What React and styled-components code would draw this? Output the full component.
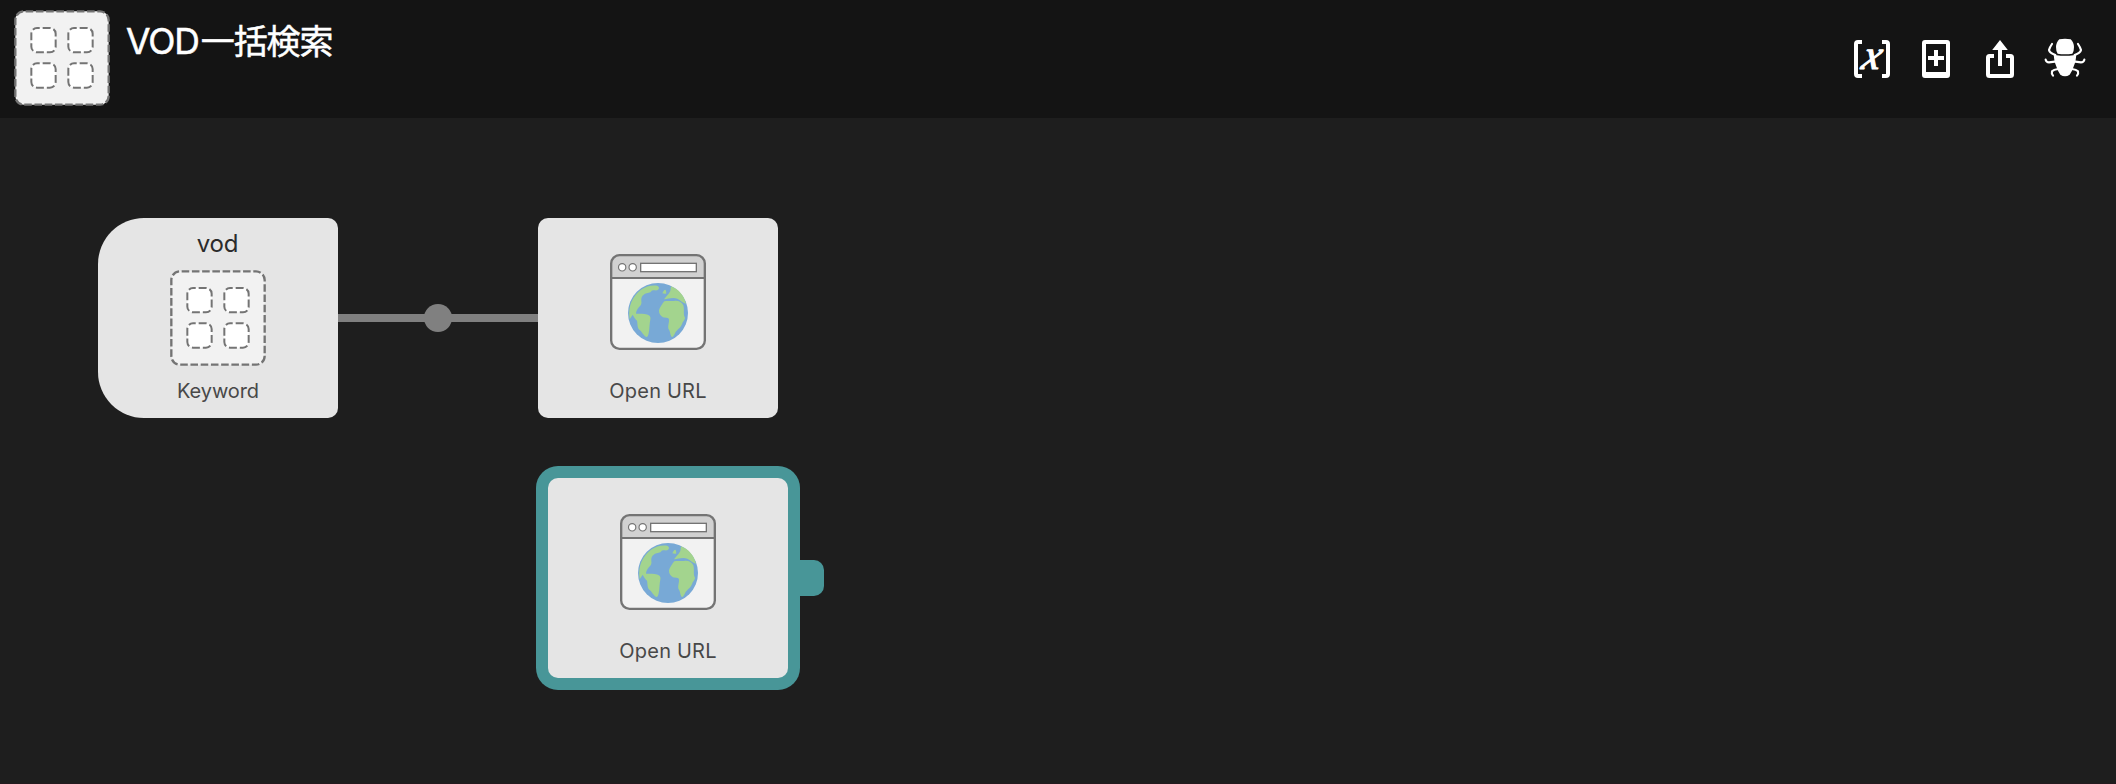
import React from "react";
import styled, { createGlobalStyle, css } from "styled-components";

const GlobalStyle = createGlobalStyle`
  * { box-sizing: border-box; }
  body { margin: 0; background: #1e1e1e; }
`;

const Page = styled.div`
  display: flex;
  flex-direction: column;
  width: 100%;
  height: 100vh;
  min-height: 784px;
  background: #1e1e1e;
  font-family: Inter, "Noto Sans CJK JP", sans-serif;
`;

const Header = styled.header`
  display: flex;
  align-items: flex-start;
  flex: none;
  height: 118px;
  padding: 10px 20px 0 14px;
  background: #141414;
`;

const Title = styled.h1`
  flex: 1;
  margin: 9px 0 0 16px;
  color: #fff;
  font-size: 35.5px;
  font-weight: 400;
  line-height: 46px;
  letter-spacing: -1.1px;
  white-space: nowrap;
  -webkit-text-stroke: 0.5px #fff;
`;

const Kanji = styled.span`
  font-family: "Noto Sans CJK JP", sans-serif;
  font-size: 34px;
  line-height: 1;
  letter-spacing: -1.1px;
  margin-left: 2px;
`;

const Tools = styled.nav`
  display: flex;
  height: 98px;
`;

const ToolButton = styled.button`
  display: flex;
  align-items: center;
  justify-content: center;
  width: 64px;
  height: 98px;
  padding: 0;
  border: 0;
  background: none;
  color: #fff;
`;

const Canvas = styled.main`
  position: relative;
  flex: 1;
  border-bottom: 1px solid #231a1e;
`;

const shapes = {
  keyword: css`
    border-radius: 46px 10px 10px 46px;
  `,
  action: css`
    border-radius: 10px;
  `,
};

const Node = styled.section`
  position: absolute;
  left: ${(p) => p.$x}px;
  top: ${(p) => p.$y}px;
  display: flex;
  flex-direction: column;
  align-items: center;
  width: 240px;
  height: 200px;
  background: #e5e5e5;
  ${(p) => shapes[p.$shape]}
  ${(p) => p.$selected && "box-shadow: 0 0 0 12px #489698;"}
`;

const NodeTop = styled.div`
  flex: none;
  height: ${(p) => p.$height}px;
  padding: 11px 1px 0 0;
  color: #2b2b2b;
  font-size: 24px;
  line-height: 29px;
  letter-spacing: -0.2px;
`;

const NodeLabel = styled.div`
  margin-top: auto;
  height: 39px;
  color: #484848;
  font-size: 20px;
  line-height: 24px;
  letter-spacing: ${(p) => p.$tracking}px;
  white-space: nowrap;
`;

const OutputTab = styled.div`
  position: absolute;
  left: 252px;
  top: 82px;
  width: 24px;
  height: 36px;
  border-radius: 0 10px 10px 0;
  background: #489698;
`;

const Connector = styled.div`
  position: absolute;
  left: 338px;
  top: 186px;
  display: flex;
  align-items: center;
  justify-content: center;
  width: 200px;
  height: 28px;
  background: linear-gradient(#808080, #808080) center / 100% 8px no-repeat;
`;

const ConnectorDot = styled.span`
  width: 28px;
  height: 28px;
  border-radius: 50%;
  background: #808080;
`;

const Artwork = styled.svg`
  flex: none;
  width: 96px;
  height: 96px;
`;

function GridIcon() {
  return (
    <Artwork viewBox="0 0 288 288">
      <rect x="4" y="4" width="280" height="280" rx="26" fill="#f2f2f2" />
      <rect x="4" y="4" width="280" height="280" rx="26" fill="none" stroke="#747474" strokeWidth="7" strokeDasharray="22.700 8" strokeDashoffset="-5" />
      {[[52, 54], [163, 54], [52, 160], [163, 160]].map(([x, y]) => (
        <rect key={`${x}-${y}`} x={x} y={y} width="73" height="73" rx="17" fill="#fff" stroke="#747474" strokeWidth="6" strokeDasharray="24 8.850" strokeDashoffset="-17" />
      ))}
    </Artwork>
  );
}

function BrowserIcon() {
  return (
    <Artwork viewBox="60 42 288 288">
      <rect x="63.5" y="45.5" width="281" height="281" rx="25" fill="#f2f2f2" />
      <path d="M63.500 114V70.500a25 25 0 0 1 25-25h231a25 25 0 0 1 25 25V114Z" fill="#d1d1d1" />
      <rect x="63.5" y="45.5" width="281" height="281" rx="25" fill="none" stroke="#747474" strokeWidth="7" />
      <path d="M64 114H344" stroke="#747474" strokeWidth="6" />
      <circle cx="96.500" cy="82" r="11" fill="#fff" stroke="#747474" strokeWidth="3.500" />
      <circle cx="128" cy="82" r="11" fill="#fff" stroke="#747474" strokeWidth="3.500" />
      <rect x="152" y="70" width="167" height="25" fill="#fff" stroke="#747474" strokeWidth="4" />
      <circle cx="204" cy="219" r="90" fill="#78a9d6" />
      <g fill="#a3d48e">
        <path d="M119 238C113 198 128 168 153 149C168 139 188 134 203 138C209 141 208 148 202 151C194 152 187 149 183 155C178 160 168 157 163 163C154 169 153 176 154 183C156 192 152 197 147 201C141 208 138 215 138 221C146 222 154 221 163 222C175 223 184 227 181 239C178 251 179 266 176 280C174 290 171 294 165 289C158 282 155 275 149 270C141 264 143 250 141 242C136 237 131 230 128 224Z" />
        <path d="M243 139L241 153C236 164 227 170 222 178C235 176 249 171 262 176C271 180 277 188 288 191C282 165 264 147 243 139Z" />
        <path d="M223 184C233 182 243 184 252 183C265 181 276 187 280 196C284 209 279 222 284 231C288 236 279 244 277 250C273 264 261 268 255 280C251 288 249 293 245 290C240 284 242 275 235 266C233 255 238 247 237 239C236 231 226 236 219 232C212 228 206 220 207 211C209 202 217 192 223 184Z" />
        <path d="M217 160C219 155 222 149 226 149C229 152 228 157 229 160C225 163 221 161 217 160Z" />
      </g>
    </Artwork>
  );
}

function VariableIcon() {
  return (
    <svg width="36" height="38" viewBox="0 0 36 38" overflow="visible">
      <path d="M8 2H4a2 2 0 0 0-2 2v30a2 2 0 0 0 2 2h4M28 2h4a2 2 0 0 1 2 2v30a2 2 0 0 1-2 2h-4" fill="none" stroke="currentColor" strokeWidth="4" />
      <text transform="translate(18 29) skewX(-14)" x="-2.500" textAnchor="middle" fill="currentColor" stroke="currentColor" strokeWidth="1.1" fontFamily="Liberation Serif, serif" fontStyle="italic" fontWeight="400" fontSize="42">x</text>
    </svg>
  );
}

function AddIcon() {
  return (
    <svg width="28" height="38" viewBox="0 0 28 38" fill="currentColor">
      <path fillRule="evenodd" d="M3 0h22a3 3 0 0 1 3 3v32a3 3 0 0 1-3 3H3a3 3 0 0 1-3-3V3a3 3 0 0 1 3-3ZM4 4v28h20V4Z" />
      <path d="M12 10h4v6h6v4h-6v6h-4v-6H6v-4h6Z" />
    </svg>
  );
}

function ShareIcon() {
  return (
    <svg width="28" height="38" viewBox="0 0 28 38">
      <path d="M8 16H3.500A1.500 1.500 0 0 0 2 17.500v17A1.500 1.500 0 0 0 3.500 36h21a1.500 1.500 0 0 0 1.500-1.500v-17a1.500 1.500 0 0 0-1.500-1.500H20" fill="none" stroke="currentColor" strokeWidth="4" />
      <path d="M14 0L21.800 10H16v16h-4V10H6.200Z" fill="currentColor" />
    </svg>
  );
}

function BugIcon() {
  return (
    <svg width="44" height="40" viewBox="216 27 132 120" fill="currentColor" overflow="visible">
      <path d="M268 28Q285 25 302 28Q311 36 312 51Q312 65 307 71Q285 74 263 71Q258 65 258 51Q259 36 268 28Z" />
      <path d="M251 72Q256 74 260 76Q285 79 310 76Q314 74 319 72Q318 85 316 96Q311 110 306 122L299 134Q285 143 271 134L264 122Q259 110 254 96Q252 85 251 72Z" />
      <g fill="none" stroke="currentColor" strokeWidth="6.500" strokeLinecap="round" strokeLinejoin="round">
        <path d="M246 42Q239 52 237 60Q239 69 256 75M324 42Q331 52 333 60Q331 69 314 75" />
        <path d="M227 89Q229 97 237 97L254 95M343 89Q341 97 333 97L316 95" />
        <path d="M249 137Q244 131 246 124Q251 119 264 117M321 137Q326 131 324 124Q319 119 306 117" />
      </g>
    </svg>
  );
}

const tools = [
  ["Variables", VariableIcon],
  ["Add", AddIcon],
  ["Share", ShareIcon],
  ["Debug", BugIcon],
];

export default function App() {
  return (
    <Page>
      <GlobalStyle />
      <Header>
        <GridIcon />
        <Title>
          VOD<Kanji>一括検索</Kanji>
        </Title>
        <Tools>
          {tools.map(([name, Icon]) => (
            <ToolButton key={name} aria-label={name}>
              <Icon />
            </ToolButton>
          ))}
        </Tools>
      </Header>
      <Canvas>
        <Connector>
          <ConnectorDot />
        </Connector>
        <Node $x={98} $y={100} $shape="keyword">
          <NodeTop $height={52}>vod</NodeTop>
          <GridIcon />
          <NodeLabel $tracking={-0.1}>Keyword</NodeLabel>
        </Node>
        <Node $x={538} $y={100} $shape="action">
          <NodeTop $height={36} />
          <BrowserIcon />
          <NodeLabel $tracking={0.2}>Open URL</NodeLabel>
        </Node>
        <Node $x={548} $y={360} $shape="action" $selected>
          <NodeTop $height={36} />
          <BrowserIcon />
          <NodeLabel $tracking={0.2}>Open URL</NodeLabel>
          <OutputTab />
        </Node>
      </Canvas>
    </Page>
  );
}
